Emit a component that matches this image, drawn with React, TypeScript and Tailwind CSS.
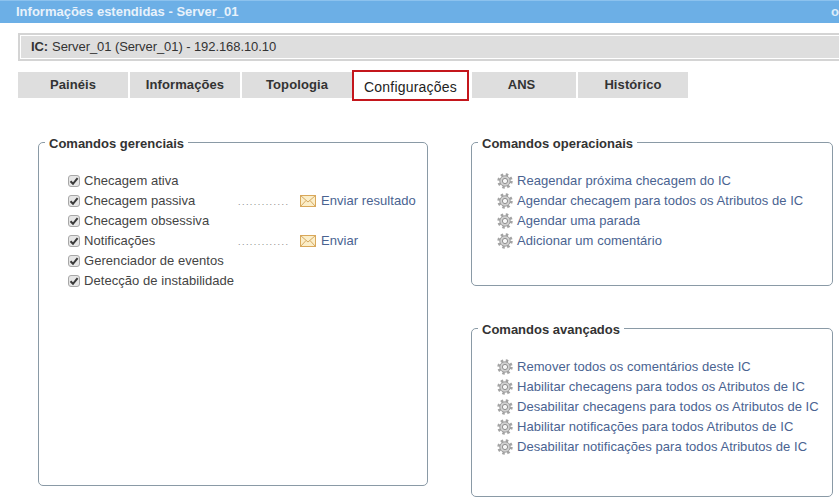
const font = { fontFamily: '"Liberation Sans", Arial, sans-serif' };

const tabs = ["Painéis", "Informações", "Topologia"];

const flags = [
  { label: "Checagem ativa" },
  { label: "Checagem passiva", action: "Enviar resultado" },
  { label: "Checagem obsessiva" },
  { label: "Notificações", action: "Enviar" },
  { label: "Gerenciador de eventos" },
  { label: "Detecção de instabilidade" },
];

const operational = [
  "Reagendar próxima checagem do IC",
  "Agendar checagem para todos os Atributos de IC",
  "Agendar uma parada",
  "Adicionar um comentário",
];

const advanced = [
  "Remover todos os comentários deste IC",
  "Habilitar checagens para todos os Atributos de IC",
  "Desabilitar checagens para todos os Atributos de IC",
  "Habilitar notificações para todos Atributos de IC",
  "Desabilitar notificações para todos Atributos de IC",
];

function Tick() {
  return (
    <span className="mr-[4px] grid h-[12px] w-[12px] shrink-0 place-items-center rounded-[3px] border border-[#a8a8a8] bg-[#e6e6e6]">
      <svg viewBox="0 0 10 10" className="h-[10px] w-[10px]">
        <path d="M1.5 5.2 L4 7.8 L8.6 2.2" fill="none" stroke="#3a3a3a" strokeWidth="2" />
      </svg>
    </span>
  );
}

function Envelope() {
  return (
    <svg viewBox="0 0 16 12" className="mr-[5px] h-[12px] w-[16px] shrink-0">
      <rect x="0.5" y="0.5" width="15" height="11" fill="#fbeec9" stroke="#d9a85a" />
      <path d="M0.5 0.5 L8 7 L15.5 0.5 M0.5 11.5 L6 5.5 M15.5 11.5 L10 5.5" fill="none" stroke="#d4a862" />
    </svg>
  );
}

function Gear() {
  return (
    <svg viewBox="0 0 16 16" className="mr-[4px] h-[16px] w-[16px] shrink-0">
      <circle cx="8" cy="8" r="6.2" fill="none" stroke="#a3a3a3" strokeWidth="3" strokeDasharray="2.4 2.47" />
      <circle cx="8" cy="8" r="5.2" fill="#d0d0d0" stroke="#a0a0a0" strokeWidth="1" />
      <circle cx="8" cy="8" r="2.6" fill="#f7f7f7" stroke="#8f8f8f" strokeWidth="1" />
    </svg>
  );
}

function Panel({ title, className, children }: { title: string; className: string; children: React.ReactNode }) {
  return (
    <fieldset className={`rounded-[5px] border border-[#8a9aa6] ${className}`}>
      <legend className="ml-[6px] px-[4px] pt-[2px] text-[13px] leading-[15px] font-bold text-[#333]">
        {title}
      </legend>
      {children}
    </fieldset>
  );
}

function CommandList({ items, className }: { items: string[]; className: string }) {
  return (
    <ul className={`pl-[25px] ${className}`}>
      {items.map((item) => (
        <li key={item} className="flex h-[20px] items-center text-[13px] tracking-[0.05px] text-[#4a6391]">
          <Gear />
          {item}
        </li>
      ))}
    </ul>
  );
}

export default function App() {
  return (
    <div className="h-[504px] w-[839px] overflow-hidden bg-white" style={font}>
      <div className="flex h-[23px] items-center justify-between border-t border-[#8cc2ee] bg-[#6cafe6] pl-[16px] text-[13px] font-bold text-[#e8f2fb]">
        <span>Informações estendidas - Server_01</span>
        <span className="text-[#dcecf9]">o</span>
      </div>

      <div className="mt-[10px] ml-[18px] border-y-2 border-l-2 border-[#d4d4d4] py-px pl-px">
        <div className="flex h-[22px] items-center bg-[#dedede] pl-[10px] text-[13px] tracking-[-0.08px] text-[#333]">
          <b className="mr-[4px]">IC:</b>Server_01 (Server_01) - 192.168.10.10
        </div>
      </div>

      <nav className="mt-[9px] ml-[18px] flex h-[31px] items-start text-[13px] text-[#333]">
        {tabs.map((tab) => (
          <div
            key={tab}
            className="mt-[2px] mr-[2px] flex h-[26px] w-[110px] items-center justify-center bg-[#dedede] font-bold tracking-[0.1px]"
          >
            {tab}
          </div>
        ))}
        <div className="-ml-[2px] flex h-[31px] w-[117px] items-center justify-center border-2 border-[#c4161c] bg-white pt-[3px] text-[14px] tracking-[0.2px] text-[#222]">
          Configurações
        </div>
        <div className="mt-[2px] ml-[3px] flex h-[26px] w-[104px] items-center justify-center bg-[#dedede] pr-[5px] font-bold">
          ANS
        </div>
        <div className="mt-[2px] ml-[2px] flex h-[26px] w-[110px] items-center justify-center bg-[#dedede] font-bold tracking-[0.1px]">
          Histórico
        </div>
      </nav>

      <main className="mt-[33px] flex items-start pl-[38px]">
        <Panel title="Comandos gerenciais" className="h-[352px] w-[390px]">
          <ul className="pt-[20px] pl-[29px]">
            {flags.map((flag) => (
              <li key={flag.label} className="flex h-[20px] items-center text-[13px] tracking-[0.05px] text-[#444]">
                <span className="flex w-[170px] items-center">
                  <Tick />
                  {flag.label}
                </span>
                {flag.action ? (
                  <>
                    <span className="w-[62px] translate-y-[1px] text-[9px] leading-none tracking-[1.45px] text-[#888]">
                      .............
                    </span>
                    <Envelope />
                    <span className="text-[#4a6391]">{flag.action}</span>
                  </>
                ) : null}
              </li>
            ))}
          </ul>
        </Panel>

        <div className="ml-[43px] flex w-[362px] flex-col gap-[34px]">
          <Panel title="Comandos operacionais" className="h-[152px]">
            <CommandList items={operational} className="pt-[20px]" />
          </Panel>
          <Panel title="Comandos avançados" className="h-[177px]">
            <CommandList items={advanced} className="pt-[20px]" />
          </Panel>
        </div>
      </main>
    </div>
  );
}
